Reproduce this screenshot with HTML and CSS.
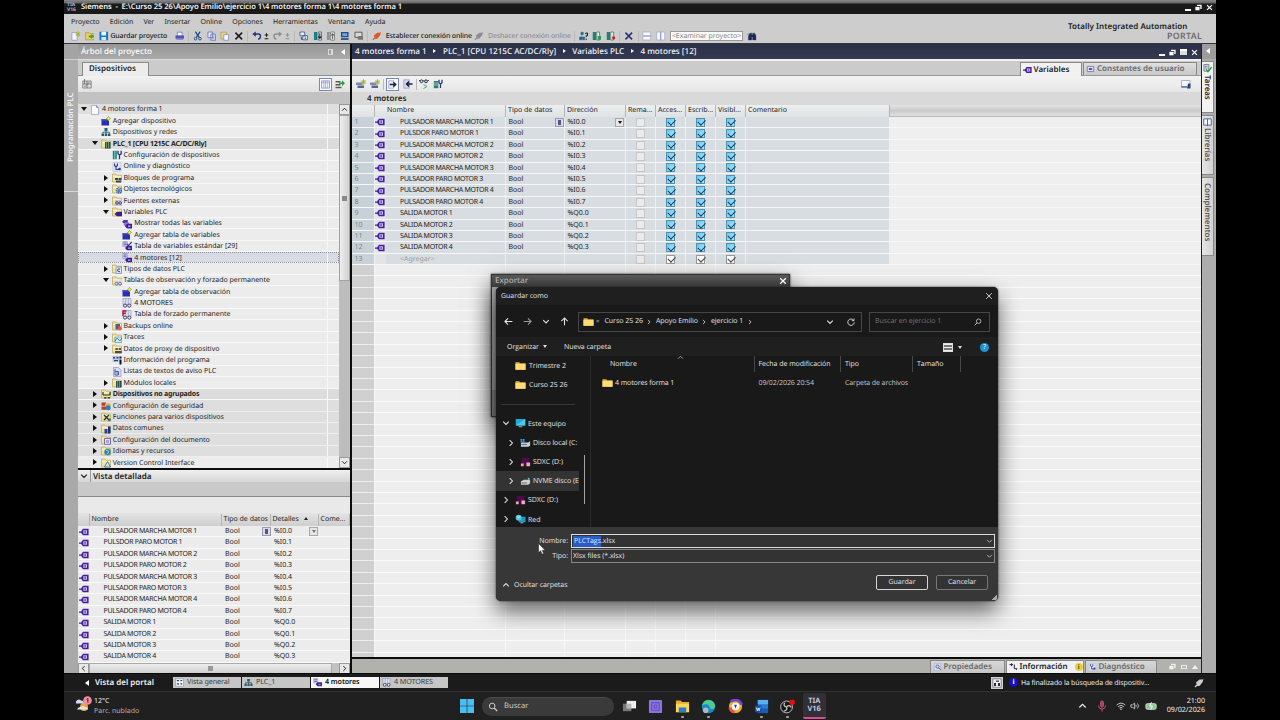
FILE: index.html
```html
<!DOCTYPE html>
<html lang="es">
<head>
  <meta charset="UTF-8">
  <title>Siemens - 4 motores forma 1</title>
  <link rel="stylesheet" href="styles.css">
</head>
<body>
  <svg class="sprite" xmlns="http://www.w3.org/2000/svg">
    <symbol id="i-tag" viewBox="0 0 10 8"><path d="M0 3.500h2L4 .8h5.600v6.400H4L2 4.800H0z" fill="#44209a"/><path d="M4.300 2.300h3.700v3.400H4.300z" fill="#cfc2f0"/><path d="M5.300 3.300h1.700v1.400H5.300z" fill="#5a35b0"/></symbol>
    <symbol id="i-page" viewBox="0 0 10 10"><path d="M1.500.5h5l2 2v7h-7z" fill="#fafbff" stroke="#9aa6cc" stroke-width=".8"/><path d="M6.500.5v2h2" fill="none" stroke="#7784b8" stroke-width=".8"/></symbol>
    <symbol id="i-new" viewBox="0 0 10 10"><path d="M.5 3h7.500v6.500H.5z" fill="#2a2fae"/><path d="M.5 3h7.500v1.500H.5z" fill="#4e58cc"/><path d="M7.500 0v5M5 2.500h5M6 1l3 3M9 1L6 4" stroke="#a9b820" stroke-width=".9"/><circle cx="7.500" cy="2.500" r="1" fill="#fff7a0"/></symbol>
    <symbol id="i-net" viewBox="0 0 10 10"><path d="M3.500 1h3v3h-3zM.5 6.500h2.600v2.500H.5zM3.800 6.500h2.500v2.500H3.800zM7 6.500h2.500v2.500H7z" fill="#235f78"/><path d="M5 4v2.500M1.800 6.500V5.200h6.500v1.300" stroke="#2c4858" fill="none" stroke-width=".8"/></symbol>
    <symbol id="i-folder" viewBox="0 0 10 10"><path d="M.5 1h3.500l1 1.200h4.500V9h-9z" fill="#f1e3a0" stroke="#b9a45c" stroke-width=".7"/><path d="M1 3.500h8" stroke="#fff8d8" stroke-width=".8"/></symbol>
    <symbol id="i-plc" viewBox="0 0 10 10"><use href="#i-folder"/><path d="M4 3h5.500v6.500H4z" fill="#27504c"/><path d="M5.500 3v6M7.500 3v6" stroke="#7fb09a" stroke-width=".7"/></symbol>
    <symbol id="i-conf" viewBox="0 0 10 10"><path d="M.8.8h4v8.400h-4z" fill="#1e8088"/><path d="M2.800 1v8" stroke="#a5dfe0" stroke-width=".8"/><path d="M6 .8v3l1.500 1v4.500M9.200.8v3L7.500 5" fill="none" stroke="#23388c" stroke-width="1.300"/></symbol>
    <symbol id="i-diag" viewBox="0 0 10 10"><path d="M1 .5h8v9H1z" fill="#dfe4f4" stroke="#b4bddc" stroke-width=".6"/><path d="M2.500 1.500v2L4 5l1.400-1.500v-2M4 5v2.500h3" fill="none" stroke="#2a3d92" stroke-width="1.100"/><circle cx="7.500" cy="7" r="1.300" fill="#2a3d92"/></symbol>
    <symbol id="i-blocks" viewBox="0 0 10 10"><use href="#i-folder"/><path d="M3 5h3v2H3zM6.500 5h3v2h-3zM4 7.500h5v2H4z" fill="#34494c"/></symbol>
    <symbol id="i-tech" viewBox="0 0 10 10"><use href="#i-folder"/><circle cx="7" cy="6.500" r="2.500" fill="none" stroke="#2b62b4" stroke-width="1.600" stroke-dasharray="1.200 .6"/><circle cx="7" cy="6.500" r="1.500" fill="#3f78c6"/></symbol>
    <symbol id="i-ext" viewBox="0 0 10 10"><use href="#i-folder"/><path d="M3 4h7v5.500H3z" fill="#bfc2d8"/><circle cx="5" cy="7" r="1.300" fill="none" stroke="#4b4c80"/><circle cx="8.200" cy="7" r="1.300" fill="none" stroke="#4b4c80"/></symbol>
    <symbol id="i-vars" viewBox="0 0 10 10"><use href="#i-folder"/><path d="M2.500 7L5 4.800h5v4.500H5z" fill="#3c1f8c"/></symbol>
    <symbol id="i-table" viewBox="0 0 10 10"><path d="M.8.5h4.500v5H.8z" fill="#dfe1f3" stroke="#8686b8" stroke-width=".6"/><path d="M1.500 2h3M1.500 3.800h3" stroke="#4e3b9c" stroke-width=".9"/><path d="M3 7l2-2.300h5v4.600H5z" fill="#3e1f96"/><path d="M6 6.500h2.500V8H6z" fill="#9e8dd4"/></symbol>
    <symbol id="i-alltags" viewBox="0 0 10 10"><path d="M0 2.800L1.800 1h4v3.500h-4z" fill="#5434a8"/><path d="M1.500 5.500l1.800-2h4v4h-4z" fill="#8a76cc"/><path d="M3 7.200l2-2.400h5v4.700H5z" fill="#3e1f96"/><path d="M6 6.500h2.500V8H6z" fill="#b5a8e0"/></symbol>
    <symbol id="i-stdtable" viewBox="0 0 10 10"><use href="#i-table"/><path d="M5 3l1.500 1.600L9.700.8" fill="none" stroke="#3a3a8c" stroke-width="1.300"/></symbol>
    <symbol id="i-types" viewBox="0 0 10 10"><use href="#i-folder"/><path d="M4 3h5.500v6.500H4z" fill="#e3e6f4" stroke="#6a72a6" stroke-width=".6"/><path d="M8 5q-2.500-.5-2.500 1.200T8 7.800" fill="none" stroke="#26388c"/></symbol>
    <symbol id="i-watch" viewBox="0 0 10 10"><path d="M1 .5h8v6H1z" fill="#dfe2f2" stroke="#8f96bc" stroke-width=".7"/><path d="M3.600 1v5M6.300 1v5" stroke="#8f96bc" stroke-width=".7"/><circle cx="3" cy="7.600" r="1.600" fill="#e8e8f4" stroke="#33365e" stroke-width=".9"/><circle cx="7.300" cy="7.600" r="1.600" fill="#e8e8f4" stroke="#33365e" stroke-width=".9"/></symbol>
    <symbol id="i-wfolder" viewBox="0 0 10 10"><use href="#i-folder"/><path d="M3 3.500h7v4H3z" fill="#dfe2f2"/><circle cx="4.500" cy="7.600" r="1.500" fill="#d8daf0" stroke="#55588a" stroke-width=".8"/><circle cx="8" cy="7.600" r="1.500" fill="#d8daf0" stroke="#55588a" stroke-width=".8"/></symbol>
    <symbol id="i-force" viewBox="0 0 10 10"><use href="#i-watch"/><path d="M1 6V1h3.500M1 3.300h2.800" fill="none" stroke="#c01040" stroke-width="1.400"/></symbol>
    <symbol id="i-backup" viewBox="0 0 10 10"><use href="#i-folder"/><path d="M3.500 3h4.500v5.500H3.500z" fill="#4a5aa6"/><circle cx="7.800" cy="7.200" r="2" fill="#e2602e"/></symbol>
    <symbol id="i-trace" viewBox="0 0 10 10"><use href="#i-folder"/><path d="M3 4h6.800v5.500H3z" fill="#d5eef6" stroke="#3b85a6" stroke-width=".6"/><path d="M3 8q2-4 3.500-1.500T10 5" fill="none" stroke="#1d6c9a"/></symbol>
    <symbol id="i-proxy" viewBox="0 0 10 10"><use href="#i-folder"/><path d="M3.500 4h2.300v2H3.500zM6.800 4h2.300v2H6.800zM3 7h6.800v2.300H3z" fill="#4a4d44"/></symbol>
    <symbol id="i-info" viewBox="0 0 10 10"><path d="M.5.800h7v6h-7z" fill="#bcc4e2"/><path d="M1 2h2v1.500H1zM4.500 2h2v1.500h-2zM2 5h4v1.300H2z" fill="#35417c"/><path d="M7.500 1.500h2v2h-2zM7.500 4.500h2v5h-2z" fill="#101424"/></symbol>
    <symbol id="i-list" viewBox="0 0 10 10"><path d="M1.500.5h5L9 3v6.500H1.500z" fill="#d7dcf0" stroke="#8b95c4" stroke-width=".7"/><path d="M3 2v6M3 4.500h3.500V8H3M4.500 6h2" fill="none" stroke="#4a5aa2"/></symbol>
    <symbol id="i-ungroup" viewBox="0 0 10 10"><use href="#i-folder"/><path d="M2 3v3M9 3v3M2 6h7M3 8.800h2.500M6.500 8.800H9" stroke="#27332c" stroke-width="1.200"/></symbol>
    <symbol id="i-sec" viewBox="0 0 10 10"><path d="M.5 1.500h4.500v3.300H.5zM.5 5.500h4.500v3.300H.5z" fill="#b8402c"/><path d="M4 2.500h5.500V5H4z" fill="#d9b14d"/><circle cx="7.200" cy="6.800" r="2.500" fill="#2f80b4"/></symbol>
    <symbol id="i-func" viewBox="0 0 10 10"><use href="#i-folder"/><path d="M3 3l5 5M8 3L3 8" stroke="#23392c" stroke-width="1.400"/><path d="M7.500 6.500h2.200v2.700H7.500z" fill="#2c7858"/></symbol>
    <symbol id="i-common" viewBox="0 0 10 10"><use href="#i-folder"/><path d="M3.500 5h3v4.500h-3z" fill="#2b3fb8"/><path d="M7 2.500h2.500v7H7z" fill="#20307e"/></symbol>
    <symbol id="i-doc" viewBox="0 0 10 10"><use href="#i-folder"/><path d="M3.500 3.500h6v5.800h-6z" fill="#e4e2f4" stroke="#6c5fae" stroke-width=".9"/><path d="M5 5h3v3H5z" fill="#a9a4d4"/></symbol>
    <symbol id="i-lang" viewBox="0 0 10 10"><use href="#i-folder"/><circle cx="6.500" cy="6" r="3.200" fill="#2787ad"/><path d="M5 4.500q2-1 2.500.8T5.600 8" fill="none" stroke="#a5e0d0"/></symbol>
    <symbol id="i-vci" viewBox="0 0 10 10"><use href="#i-folder"/><path d="M3.500 9L6.500 3.500 9.500 9z" fill="#d7e6ee" stroke="#41769a" stroke-width=".9"/></symbol>
    <symbol id="i-save" viewBox="0 0 10 10"><path d="M.5.500h9v9h-9z" fill="#1376c4"/><path d="M2.500.500h5v4h-5z" fill="#e8f6ff"/><path d="M2.500 6h5v3.500h-5z" fill="#d0e6f5"/></symbol>
    <symbol id="i-open" viewBox="0 0 10 10"><path d="M.5 1.500h4l1 1h4V9H.5z" fill="#e8cf58" stroke="#a58b28" stroke-width=".6"/><path d="M4 4.500h2.500V2.800L10 5.500 6.500 8V6.500H4z" fill="#2fa548"/></symbol>
    <symbol id="i-newpage" viewBox="0 0 10 10"><path d="M1 1.500h5.500V9.500H1z" fill="#f5f7ff" stroke="#8090c0" stroke-width=".7"/><path d="M7.500 0v6M4.700 3h5.300M5.500 1l4 4M9.500 1l-4 4" stroke="#a4b018" stroke-width=".9"/></symbol>
    <symbol id="i-print" viewBox="0 0 10 10"><path d="M2.500 1h5v4h-5z" fill="#fff" stroke="#5862b8" stroke-width=".7"/><path d="M.5 4.500h9V8h-9z" fill="#4a55c4"/><path d="M1.500 8h7v1.300h-7z" fill="#9d87cf"/></symbol>
    <symbol id="i-cut" viewBox="0 0 10 10"><path d="M2.500.5l4 6M7.500.5l-4 6" stroke="#254d82" stroke-width="1.400"/><circle cx="2.700" cy="7.800" r="1.400" fill="none" stroke="#254d82"/><circle cx="7.300" cy="7.800" r="1.400" fill="none" stroke="#254d82"/></symbol>
    <symbol id="i-copy" viewBox="0 0 10 10"><path d="M1 .8h5v6H1zM4 3h5v6.500H4z" fill="#e8ecfb" stroke="#5a68b8" stroke-width=".8"/><path d="M5 5h3M5 6.500h3M5 8h3" stroke="#6878c0" stroke-width=".7"/></symbol>
    <symbol id="i-paste" viewBox="0 0 10 10"><path d="M1 1h6v7H1z" fill="#ecd58c" stroke="#a3904c" stroke-width=".7"/><path d="M4 3.500h5v6H4z" fill="#f6f8ff" stroke="#7d8abc" stroke-width=".8"/></symbol>
    <symbol id="i-x" viewBox="0 0 10 10"><path d="M1.500 1.500l7 7M8.500 1.500l-7 7" stroke="currentColor" stroke-width="1.700"/></symbol>
    <symbol id="i-xthin" viewBox="0 0 10 10"><path d="M1.500 1.500l7 7M8.500 1.500l-7 7" stroke="currentColor" stroke-width="1.100"/></symbol>
    <symbol id="i-undo" viewBox="0 0 10 10"><path d="M2 3h4.500q2.500 0 2.500 2.300T6.500 8.500" fill="none" stroke="currentColor" stroke-width="1.600"/><path d="M4 .2v5.600L.3 3z" fill="currentColor"/></symbol>
    <symbol id="i-more" viewBox="0 0 6 10"><path d="M3 1.500v4.500M.8 3.800h4.400M.8 8.300h4.400" stroke="currentColor" stroke-width="1.200"/></symbol>
    <symbol id="i-compile" viewBox="0 0 10 10"><path d="M1 .8h5v4H1zM4 4.500h5v4.500H4z" fill="#e8f0fb" stroke="#405f8e" stroke-width=".9"/><path d="M2.500 6v2.500H4M6 6h1.500M6 7.500h1.500" stroke="#27548a" fill="none"/></symbol>
    <symbol id="i-down" viewBox="0 0 10 10"><path d="M1 .8h3.500v8.500H1z" fill="#1b7f84"/><path d="M5.500 .8H9v8.500H5.500z" fill="#e8f2f5" stroke="#345" stroke-width=".7"/><path d="M7.200 2v5M5.600 5.500l1.600 2 1.600-2" fill="none" stroke="#121c30" stroke-width="1.100"/></symbol>
    <symbol id="i-up" viewBox="0 0 10 10"><path d="M1 .8h3v8.500H1z" fill="#929292"/><path d="M5 .8h4v8.500H5z" fill="#f3f3f3" stroke="#555" stroke-width=".7"/><path d="M7 8V3M5.600 4.500l1.400-2 1.400 2" fill="none" stroke="#444" stroke-width="1"/></symbol>
    <symbol id="i-screen" viewBox="0 0 10 10"><path d="M1 .8h8v5.500H1z" fill="#244d86"/><path d="M2.500 2h5v3h-5z" fill="#78a8d8"/><path d="M1 7.200h8v2H1z" fill="#3c5c90"/></symbol>
    <symbol id="i-rt" viewBox="0 0 10 10"><path d="M1 1h7.500v5.500H1z" fill="#d8d8d8" stroke="#5b5b5b"/><path d="M4 5h5.500v4H4z" fill="#777"/></symbol>
    <symbol id="i-plug" viewBox="0 0 10 10"><path d="M1 9l2-2" stroke="currentColor" stroke-width="1.400"/><path d="M2 4.500L5.500 1.500h3L9.500.5 8.700 4 5.500 8H3z" fill="currentColor"/></symbol>
    <symbol id="i-access" viewBox="0 0 10 10"><path d="M2 1h2.500v2.500H2zM.5 6h3v3h-3zM4 6h2v3H4zM3 3.500V6" fill="#27648c" stroke="#27648c" stroke-width=".5"/><path d="M6.500 2.500q2.500-1.500 2.500.4T7.700 5v1M7.700 8v1" fill="none" stroke="#14182c" stroke-width="1.200"/></symbol>
    <symbol id="i-start" viewBox="0 0 10 10"><path d="M.8.8h3.500v8.400H.8z" fill="#257f72"/><path d="M5 .8h3v8.400H5z" fill="#e9f1ee" stroke="#3a5c52" stroke-width=".7"/><path d="M6 5h3.500v4H6z" fill="#25a04c"/></symbol>
    <symbol id="i-stop" viewBox="0 0 10 10"><path d="M.8.8h3.500v8.400H.8z" fill="#257f72"/><path d="M5 .8h3v8.400H5z" fill="#e9f1ee" stroke="#3a5c52" stroke-width=".7"/><path d="M6.500 5.500h3v3h-3z" fill="#c81e2c"/></symbol>
    <symbol id="i-hsplit" viewBox="0 0 10 10"><path d="M.8.8h8.400v8.400H.8z" fill="#f8f8fd" stroke="#9ba2ca" stroke-width=".7"/><path d="M1 5h8" stroke="#606c9e" stroke-width=".9"/></symbol>
    <symbol id="i-vsplit" viewBox="0 0 10 10"><path d="M.8.8h8.400v8.400H.8z" fill="#f8f8fd" stroke="#9ba2ca" stroke-width=".7"/><path d="M5 1v8" stroke="#606c9e" stroke-width=".9"/></symbol>
    <symbol id="i-book" viewBox="0 0 10 10"><path d="M.8 1.500H5l4.200 0v7H.8z" fill="#f8f8fd" stroke="#4458a4"/><path d="M5 1.500v8" stroke="#4458a4"/></symbol>
    <symbol id="i-find" viewBox="0 0 10 10"><path d="M0 3h2M3 2h2v2h1V2h2l1.500 3v4.200H6V6H5v3.200H1.500V5z" fill="#1c2a5a" stroke="#1c2a5a" stroke-width=".4"/></symbol>
    <symbol id="i-addrow" viewBox="0 0 10 10"><path d="M0 3.500h6.500V6H0z" fill="#7f88ae"/><path d="M1.500 6.500h6.500V9H1.500z" fill="#59638f"/><path d="M7.500.300v5.400M4.800 3h5.400M5.600 1.100l3.800 3.800M9.400 1.100L5.600 4.900" stroke="#a2ae20" stroke-width=".9"/></symbol>
    <symbol id="i-export" viewBox="0 0 10 10"><path d="M.8.8h5.500v8.400H.8z" fill="#e6eaf8" stroke="#8e98c4" stroke-width=".7"/><path d="M2 5h5.500M6 2.500L8.700 5 6 7.500" fill="none" stroke="#171c3a" stroke-width="1.400"/></symbol>
    <symbol id="i-import" viewBox="0 0 10 10"><path d="M.8.8h5.500v8.400H.8z" fill="#d3d8ec" stroke="#8e98c4" stroke-width=".7"/><path d="M9.500 5H4M6 2.500L3.500 5 6 7.500" fill="none" stroke="#171c3a" stroke-width="1.400"/></symbol>
    <symbol id="i-glasses" viewBox="0 0 10 10"><path d="M0 1.500h1M4 1.800h1.500M8.500 1.500h1.500" stroke="#20243c" stroke-width=".8"/><circle cx="2.500" cy="2.300" r="1.400" fill="none" stroke="#20243c"/><circle cx="7" cy="2.300" r="1.400" fill="none" stroke="#20243c"/><path d="M4.500 5.500l3.500 2-3.500 2" fill="none" stroke="#3eb07e"/></symbol>
    <symbol id="i-mod" viewBox="0 0 10 10"><path d="M.8 2h4.500v7.200H.8z" fill="#38766f"/><path d="M1 4h4M1 6h4" stroke="#b5dcd0" stroke-width=".8"/><path d="M6 .8v3L7.500 5v4M9 .8v3L7.500 5" fill="none" stroke="#223c80" stroke-width="1.300"/></symbol>
    <symbol id="i-grid" viewBox="0 0 10 10"><path d="M.8 2h8.400v7H.8z" fill="#dcdcdc" stroke="#777" stroke-width=".8"/><path d="M2.500 0v5M5 2v7M7.500 3l-5 5M1 5h8" stroke="#6c6c6c" stroke-width=".8"/></symbol>
    <symbol id="i-cols" viewBox="0 0 10 10"><path d="M.5 1h9v8h-9z" fill="#eef0fa" stroke="#7784b8" stroke-width=".8"/><path d="M3 1v8M5 1v8M7 1v8M1 3h8" stroke="#8994c2" stroke-width=".6"/></symbol>
    <symbol id="i-overview" viewBox="0 0 10 10"><path d="M.5.800h9v8.400h-9z" fill="#f4f6fa" stroke="#8890a8" stroke-width=".7"/><path d="M2 3h2.500M6 3h2M2 6.500h2.500M6 6.500h2" stroke="#2b4a6c" stroke-width="1.400"/></symbol>
    <symbol id="i-goto" viewBox="0 0 10 10"><path d="M.5 2h5v1.500h-5zM.5 5h5v1.500h-5zM.5 7.800h6v1.500h-6z" fill="#555b54"/><path d="M4 3.500h3V1.200L10 4.300 7 7V5H4z" fill="#2c9a44"/></symbol>
    <symbol id="i-tasks" viewBox="0 0 10 10"><path d="M1 1h5.500v7.500H1z" fill="#dfe6ee" stroke="#4a5a70" stroke-width=".8"/><path d="M2 3h3M2 5h3" stroke="#4a5a70" stroke-width=".8"/><path d="M3.500 6.500l2 2.500L9.500 4" fill="none" stroke="#25a03c" stroke-width="1.600"/></symbol>
    <symbol id="i-layout" viewBox="0 0 10 10"><path d="M.5 1.500h8.500v7H.5z" fill="#f6f8fd" stroke="#8b96be" stroke-width=".7"/><path d="M.5 7.800H6" stroke="#334a88"/><path d="M7 4.500h2.500v5H6z" fill="#284878"/></symbol>
    <symbol id="i-mini" viewBox="0 0 10 10"><path d="M.8.8h8.400v8.400H.8z" fill="#f0f0f4" stroke="#666" stroke-width=".7"/><path d="M2 5h2v3H2zM6 5h2v3H6z" fill="#222a50"/><path d="M4 2.500h3v1.500H4z" fill="#555"/></symbol>
    <symbol id="i-const" viewBox="0 0 10 10"><path d="M1 1.800h8v6.400H1z" fill="#e3e1f4" stroke="#6a64b0" stroke-width=".9"/><path d="M3 4h4v2H3z" fill="#3a3590"/></symbol>
    <symbol id="i-prop" viewBox="0 0 10 10"><path d="M1 .8h8v8.400H1z" fill="#dde2f3" stroke="#98a2c6" stroke-width=".6"/><circle cx="5" cy="4.500" r="2" fill="none" stroke="#37487e"/><path d="M6.500 6L9 8.500" stroke="#37487e" stroke-width="1.200"/></symbol>
    <symbol id="i-infotab" viewBox="0 0 10 10"><path d="M0 2h4M2 .5L4 2 2 3.700M6 2v5h1.500" fill="none" stroke="#14183c" stroke-width="1.200"/><path d="M7 6.500h3L8.500 9z" fill="#14183c"/></symbol>
    <symbol id="i-restore" viewBox="0 0 10 10"><path d="M3 1h6.500v6H7.500V3H3z" fill="currentColor"/><path d="M.5 4h6v5h-6z" fill="currentColor"/></symbol>
    <symbol id="i-dfolder" viewBox="0 0 12 10"><path d="M.5.800h4l1.200 1.300h5.800V9H.5z" fill="#e6b23c"/><path d="M.5 2.800h11V9H.5z" fill="#ffdc76"/></symbol>
    <symbol id="i-pc" viewBox="0 0 12 10"><path d="M.8.500h10.400v7.300H.8z" fill="#25a8d8"/><path d="M.8 7.800L11.200.5v7.300z" fill="#4ccbe8"/><path d="M4 8.500h4v1H4z" fill="#8ab4c4"/></symbol>
    <symbol id="i-disk" viewBox="0 0 12 10"><path d="M1 4.500h8l2-1.500v5l-2 1H1z" fill="#c5d4da"/><path d="M1.500 6h6v1.200h-6z" fill="#57737e"/><path d="M.5.500h2v1.700h-2zM3 .5h2v1.700H3zM.5 2.500h2V4h-2zM3 2.500h2V4H3z" fill="#22a4e8"/></symbol>
    <symbol id="i-nvme" viewBox="0 0 12 10"><path d="M1 5.500l3-2h7v4l-2 1.700H1z" fill="#c9cfd0"/><path d="M1.500 6.500h6v1.200h-6z" fill="#6c7478"/><circle cx="9.500" cy="2.500" r="1" fill="#74c1d4"/></symbol>
    <symbol id="i-sd" viewBox="0 0 12 10"><path d="M2 .5h8v8H2z" fill="#4f0a4e"/><path d="M1 6.500h3v3H1zM7 5.500h4v4H7z" fill="#f3a6b8"/></symbol>
    <symbol id="i-red" viewBox="0 0 12 10"><path d="M4 2.500h7.500v6H4z" fill="#2396c4"/><circle cx="4" cy="3.500" r="3.200" fill="#58c3dc"/><path d="M2 2.500q2 2 4-.5" stroke="#d7f3ea" fill="none"/><path d="M6 8.500h3v1.200H6z" fill="#8fb6c4"/></symbol>
    <symbol id="i-chev" viewBox="0 0 10 10"><path d="M1.500 3.300L5 6.800l3.500-3.500" fill="none" stroke="currentColor" stroke-width="1.300"/></symbol>
    <symbol id="i-left" viewBox="0 0 10 10"><path d="M9.300 5H1M4.500 1.500L1 5l3.500 3.500" fill="none" stroke="currentColor" stroke-width="1.200"/></symbol>
    <symbol id="i-mag" viewBox="0 0 10 10"><circle cx="5.800" cy="4" r="2.800" fill="none" stroke="currentColor"/><path d="M3.800 6L.8 9" stroke="currentColor" stroke-width="1.200"/></symbol>
    <symbol id="i-refresh" viewBox="0 0 10 10"><path d="M8.300 3A4 4 0 1 0 9 5.300M8.700.6V3.300H6" fill="none" stroke="currentColor" stroke-width="1.100"/></symbol>
  </svg>

  <div class="app">
    <header class="titlebar">
      <span class="tia-logo">TIA<br>V16</span>
      <span class="title-text">Siemens&nbsp; -&nbsp; E:\Curso 25 26\Apoyo Emilio\ejercicio 1\4 motores forma 1\4 motores forma 1</span>
      <span class="win-btns"><i class="min"></i><svg><use href="#i-restore"/></svg><svg><use href="#i-x"/></svg></span>
    </header>

    <div class="topbar">
      <nav class="menu">
        <span>Proyecto</span><span>Edición</span><span>Ver</span><span>Insertar</span><span>Online</span><span>Opciones</span><span>Herramientas</span><span>Ventana</span><span>Ayuda</span>
      </nav>
      <div class="brand"><b>Totally Integrated Automation</b><span>PORTAL</span></div>
      <div class="toolbar">
        <svg><use href="#i-newpage"/></svg><svg><use href="#i-open"/></svg><svg><use href="#i-save"/></svg>
        <span class="tb-save">Guardar proyecto</span>
        <svg><use href="#i-print"/></svg><i class="sep"></i>
        <svg><use href="#i-cut"/></svg><svg><use href="#i-copy"/></svg><svg><use href="#i-paste"/></svg><svg><use href="#i-x"/></svg><i class="sep"></i>
        <svg class="navy"><use href="#i-undo"/></svg><svg class="narrow"><use href="#i-more"/></svg>
        <svg class="grey flip"><use href="#i-undo"/></svg><svg class="narrow grey"><use href="#i-more"/></svg><i class="sep"></i>
        <svg><use href="#i-compile"/></svg><svg><use href="#i-down"/></svg><svg><use href="#i-up"/></svg><svg><use href="#i-screen"/></svg><svg><use href="#i-rt"/></svg><i class="sep"></i>
        <svg class="orange"><use href="#i-plug"/></svg><span class="tb-on">Establecer conexión online</span>
        <svg class="grey"><use href="#i-plug"/></svg><span class="tb-off">Deshacer conexión online</span>
        <i class="sep"></i><svg><use href="#i-access"/></svg><svg><use href="#i-start"/></svg><svg><use href="#i-stop"/></svg><i class="sep"></i>
        <svg class="navy"><use href="#i-x"/></svg><i class="sep"></i><svg><use href="#i-hsplit"/></svg><svg><use href="#i-vsplit"/></svg>
        <span class="search-box">&lt;Examinar proyecto&gt;</span><svg><use href="#i-find"/></svg>
      </div>
    </div>

    <div class="workspace">
      <aside class="strip-left"><span>Programación PLC</span></aside>

      <section class="sidebar">
        <div class="side-head"><span>Árbol del proyecto</span><i class="pin"></i><i class="tri-left"></i></div>
        <div class="tab-band"><span class="tab">Dispositivos</span></div>
        <div class="side-tools"><svg><use href="#i-grid"/></svg><span class="pressed"><svg><use href="#i-cols"/></svg></span><svg><use href="#i-goto"/></svg></div>
        <div class="side-gap"></div>
        <div class="tree-wrap">
          <div class="tree" id="tree"></div>
          <div class="vscroll"><svg class="btn up"><use href="#i-chev"/></svg><i class="thumb"></i><i class="rest"></i><svg class="btn"><use href="#i-chev"/></svg></div>
        </div>
        <div class="detail-head"><svg><use href="#i-chev"/></svg><b>Vista detallada</b></div>
        <div class="detail-band"></div>
        <div class="detail-tools"></div>
        <div class="detail-cols"><span></span><span>Nombre</span><span>Tipo de datos</span><span>Detalles <i class="sort"></i></span><span>Come...</span></div>
        <div class="detail-rows" id="detail"></div>
        <div class="hscroll"><svg class="btn l"><use href="#i-chev"/></svg><i class="thumb"></i><i class="rest"></i><svg class="btn r"><use href="#i-chev"/></svg></div>
      </section>

      <main class="editor">
        <div class="crumbs">
          <span class="crumb-text">4 motores forma 1 <i></i> PLC_1 [CPU 1215C AC/DC/Rly] <i></i> Variables PLC <i></i> 4 motores [12]</span>
          <span class="win-btns"><i class="min"></i><svg><use href="#i-restore"/></svg><i class="max"></i><svg><use href="#i-x"/></svg></span>
        </div>
        <div class="ed-tabs">
          <span class="tab"><svg class="tag"><use href="#i-tag"/></svg>Variables</span>
          <span class="tab off"><svg><use href="#i-const"/></svg>Constantes de usuario</span>
        </div>
        <div class="ed-tools">
          <svg><use href="#i-addrow"/></svg><svg><use href="#i-addrow"/></svg><i class="sep"></i>
          <span class="pressed"><svg><use href="#i-export"/></svg></span><svg><use href="#i-import"/></svg><i class="sep"></i>
          <svg><use href="#i-glasses"/></svg><svg><use href="#i-mod"/></svg><svg class="last"><use href="#i-layout"/></svg>
        </div>
        <div class="ed-title">4 motores</div>
        <div class="grid-head"><span></span><span></span><span>Nombre</span><span>Tipo de datos</span><span>Dirección</span><span>Rema...</span><span>Acces...</span><span>Escrib...</span><span>Visibl...</span><span>Comentario</span></div>
        <div class="grid-body" id="grid"></div>
        <div class="grid-blank"><i></i><i></i><i></i><i></i><i></i><i></i><i></i><i></i></div>
        <div class="inspector">
          <span class="tab off"><svg><use href="#i-prop"/></svg>Propiedades</span>
          <span class="tab"><svg><use href="#i-infotab"/></svg>Información<i class="badge">i</i></span>
          <span class="tab off diag"><svg><use href="#i-diag"/></svg>Diagnóstico</span>
          <span class="insp-btns"><svg><use href="#i-restore"/></svg><i class="bar"></i><i class="tri-up"></i></span>
        </div>
      </main>

      <aside class="strip-right">
        <div class="sr-head"><i class="tri-left"></i></div>
        <div class="sr-tab tareas"><svg><use href="#i-tasks"/></svg><span>Tareas</span></div>
        <div class="sr-tab librerias"><svg><use href="#i-book"/></svg><span>Librerías</span></div>
        <div class="sr-tab complementos"><span>Complementos</span></div>
      </aside>
    </div>

    <div class="portal-bar">
      <span class="portal"><i class="tri-left"></i>Vista del portal</span>
      <span class="ptab"><svg><use href="#i-overview"/></svg>Vista general</span>
      <span class="ptab"><svg><use href="#i-net"/></svg>PLC_1</span>
      <span class="ptab active"><svg><use href="#i-table"/></svg>4 motores</span>
      <span class="ptab"><svg><use href="#i-watch"/></svg>4 MOTORES</span>
      <span class="status"><svg class="st-icon"><use href="#i-mini"/></svg><i class="st-info">i</i><span>Ha finalizado la búsqueda de dispositiv...</span><svg class="st-plug"><use href="#i-plug"/></svg></span>
    </div>

    <footer class="taskbar">
      <div class="weather">
        <svg viewBox="0 0 18 16"><circle cx="9" cy="11" r="4" fill="#f0a33a"/><path d="M1 7.500a3 3 0 0 1 5-3 3 3 0 0 1 3 3z" fill="#cfdcf2"/><path d="M2 13.500q1-3 4-2.500 1.500-2 4 0 3 0 3 2.500z" fill="#dbe6f6"/><circle cx="12.500" cy="4.500" r="4.300" fill="#ee8f9f"/><path d="M11.700 3.300l1.200-.8v4.200" fill="none" stroke="#4a1420"/></svg>
        <div>12°C<br><span>Parc. nublado</span></div>
      </div>
      <div class="dock">
        <svg class="win" viewBox="0 0 14 14"><path d="M0 0h6.700v6.700H0zM7.300 0H14v6.700H7.300zM0 7.300h6.700V14H0zM7.300 7.300H14V14H7.300z" fill="#48bff0"/></svg>
        <span class="task-search"><svg class="flip"><use href="#i-mag"/></svg>Buscar</span>
        <span class="app-ic"><svg viewBox="0 0 16 16"><path d="M1 5h9v8H1z" fill="#777"/><path d="M5 2h10v8H5z" fill="#f0f0f0"/><path d="M5 5h5v5H5z" fill="#b5b5b5"/></svg></span>
        <span class="app-ic"><svg viewBox="0 0 16 16"><rect x="1" y="1" width="14" height="14" rx="1" fill="#8b74e0"/><path d="M4 4h8v8H4zM6.500 6.500h3v3h-3z" fill="none" stroke="#5f49b4"/></svg></span>
        <span class="app-ic run"><svg viewBox="0 0 16 16"><path d="M1 1.500h5l1.500 1.700H15V14H1z" fill="#e9a92a"/><path d="M1 5h14v9H1z" fill="#ffd65c"/><path d="M4 9h8v5H4z" fill="#2482cc"/></svg></span>
        <span class="app-ic run"><svg viewBox="0 0 16 16"><circle cx="8" cy="8" r="7.200" fill="#1788d0"/><path d="M1 7Q4-1 12 2q5 4 2 8-5 2-5-2-1-4-8-1z" fill="#4bce8c"/><circle cx="5" cy="12" r="3" fill="#aeb8c0"/></svg></span>
        <span class="app-ic"><svg viewBox="0 0 16 16"><circle cx="8" cy="8" r="5.500" fill="#fff" stroke="#f4b02c" stroke-width="3"/><path d="M3 3a7 7 0 0 1 11.500 3" fill="none" stroke="#7546d4" stroke-width="3"/><path d="M2 9a6 6 0 0 0 5 5" fill="none" stroke="#e65040" stroke-width="3"/><path d="M6.500 6h3L8 10.500z" fill="#47339c"/></svg></span>
        <span class="app-ic run"><svg viewBox="0 0 16 16"><path d="M4 1h11v14H4z" fill="#2b7cd3"/><path d="M4 1h11v4.500H4z" fill="#58b0f2"/><path d="M4 10h11v5H4z" fill="#185abd"/><path d="M1 7h7v7H1z" fill="#1550a8"/><path d="M2.500 9l1 3.500 1-3 1 3 1-3.500" fill="none" stroke="#fff" stroke-width=".8"/></svg></span>
        <span class="app-ic run"><svg viewBox="0 0 16 16"><circle cx="7" cy="8.500" r="6.300" fill="#181818" stroke="#c4c4c4"/><path d="M7 8.500q-4-1-2-4.500M7 8.500q3-3 5 .5M7 8.500q1 4-3 4.500" fill="none" stroke="#c4c4c4" stroke-width="1.400"/><circle cx="13" cy="3.500" r="3" fill="#e01010"/></svg></span>
        <span class="app-ic tia"><span>TIA</span><span>V16</span></span>
      </div>
      <div class="tray">
        <svg class="up"><use href="#i-chev"/></svg>
        <svg viewBox="0 0 10 12" class="mic"><rect x="3.500" y="1" width="3" height="6" rx="1.500"/><path d="M1.500 5.500q0 3.500 3.500 3.500t3.500-3.500M5 9v2.500" fill="none"/></svg>
        <svg viewBox="0 0 12 10"><path d="M.8 3.800q5.200-4.500 10.400 0M2.500 5.700q3.500-3 7 0M4.200 7.400q1.800-1.500 3.600 0" fill="none" stroke="#ddd"/><circle cx="6" cy="8.800" r=".9" fill="#ddd"/></svg>
        <svg viewBox="0 0 12 10"><path d="M1 3.500h2L5.500 1.500v7L3 6.500H1zM7 3.500q1 1.500 0 3M9 2q2.500 3 0 6" fill="none" stroke="#ddd" stroke-width=".9"/></svg>
        <svg viewBox="0 0 14 10" class="batt"><rect x="1" y="2.500" width="11" height="6" rx="1.500" fill="#88c88e" stroke="#ddd"/><path d="M7 1L5 5h3L6 9" fill="none" stroke="#fff"/></svg>
        <div class="clock">21:00<br>09/02/2026</div>
      </div>
    </footer>
  </div>

  <div class="export-win"><span>Exportar</span><svg><use href="#i-x"/></svg></div>

  <div class="dialog">
    <div class="d-title"><span>Guardar como</span><svg><use href="#i-xthin"/></svg></div>
    <div class="d-nav">
      <svg><use href="#i-left"/></svg><svg class="flip dim"><use href="#i-left"/></svg><svg class="small"><use href="#i-chev"/></svg><svg class="rot"><use href="#i-left"/></svg>
      <div class="address"><svg class="fold"><use href="#i-dfolder"/></svg><em>«</em><span>Curso 25 26</span><svg class="gt"><use href="#i-chev"/></svg><span>Apoyo Emilio</span><svg class="gt"><use href="#i-chev"/></svg><span>ejercicio 1</span><svg class="gt"><use href="#i-chev"/></svg><svg class="drop"><use href="#i-chev"/></svg><svg class="refresh"><use href="#i-refresh"/></svg></div>
      <div class="d-search"><span>Buscar en ejercicio 1</span><svg><use href="#i-mag"/></svg></div>
    </div>
    <div class="d-cmd"><span class="org">Organizar <i class="caret"></i></span><span>Nueva carpeta</span><i class="listview"></i><i class="caret c2"></i><i class="help">?</i></div>
    <div class="d-body">
      <div class="places">
        <div class="place p1"><svg><use href="#i-dfolder"/></svg><span>Trimestre 2</span></div>
        <div class="place p1"><svg><use href="#i-dfolder"/></svg><span>Curso 25 26</span></div>
        <div class="rule"></div>
        <div class="place"><svg class="ex open"><use href="#i-chev"/></svg><svg><use href="#i-pc"/></svg><span>Este equipo</span></div>
        <div class="place p2"><svg class="ex"><use href="#i-chev"/></svg><svg><use href="#i-disk"/></svg><span>Disco local (C:</span></div>
        <div class="place p2"><svg class="ex"><use href="#i-chev"/></svg><svg><use href="#i-sd"/></svg><span>SDXC (D:)</span></div>
        <div class="place p2 sel"><svg class="ex"><use href="#i-chev"/></svg><svg><use href="#i-nvme"/></svg><span>NVME disco (E</span></div>
        <div class="place"><svg class="ex"><use href="#i-chev"/></svg><svg><use href="#i-sd"/></svg><span>SDXC (D:)</span></div>
        <div class="place"><svg class="ex"><use href="#i-chev"/></svg><svg><use href="#i-red"/></svg><span>Red</span></div>
        <i class="places-thumb"></i>
      </div>
      <div class="files">
        <svg class="sort-mark"><use href="#i-chev"/></svg>
        <div class="f-head"><span>Nombre</span><span>Fecha de modificación</span><span>Tipo</span><span>Tamaño</span></div>
        <div class="f-row"><span><svg><use href="#i-dfolder"/></svg>4 motores forma 1</span><span>09/02/2026 20:54</span><span>Carpeta de archivos</span></div>
      </div>
    </div>
    <div class="d-foot">
      <div class="field"><label>Nombre:</label><div class="input on"><span><mark>PLCTags</mark>.xlsx</span><svg><use href="#i-chev"/></svg></div></div>
      <div class="field"><label>Tipo:</label><div class="input"><span>Xlsx files (*.xlsx)</span><svg><use href="#i-chev"/></svg></div></div>
      <div class="d-actions"><span class="hide"><svg><use href="#i-chev"/></svg>Ocultar carpetas</span><span class="dbtn main">Guardar</span><span class="dbtn">Cancelar</span></div>
      <i class="grip"></i>
    </div>
  </div>
  <svg class="cursor" viewBox="0 0 8 12"><path d="M.6.600v9l2-1.800 1.500 3.400 1.500-.7L4.200 7.200h2.900z" fill="#fff" stroke="#222" stroke-width=".5"/></svg>

  <script src="app.js"></script>
</body>
</html>
```

FILE: styles.css
```css
* {
  margin: 0;
  padding: 0;
  box-sizing: border-box;
}

body {
  width: 1280px;
  height: 720px;
  overflow: hidden;
  background: #000;
  color: #1c1c1c;
  font-family: "Noto Sans", "Open Sans", sans-serif;
  font-size: 7px;
  line-height: 1;
  text-rendering: geometricPrecision;
  white-space: nowrap;
}

svg {
  width: 10px;
  height: 10px;
  flex: none;
  display: block;
}

i, em { font-style: normal; }

.sprite { position: absolute; width: 0; height: 0; }
.flip { transform: scaleX(-1); }
.tag { height: 8px; }

.app {
  width: 1152px;
  height: 720px;
  margin: 0 auto;
  display: flex;
  flex-direction: column;
}

/* title bar */
.titlebar {
  height: 14px;
  display: flex;
  align-items: center;
  padding: 1px 3px 0 3px;
  background: linear-gradient(#8a8a8a 0, #666 3px, #1a1a1a 4px, #191919 100%);
  color: #f2f2f2;
}

.tia-logo {
  width: 11px;
  font-size: 5px;
  font-weight: 700;
  line-height: 4.5px;
  color: #a9b4dc;
}

.title-text {
  margin-left: 3px;
  font-size: 7.6px;
  font-weight: 600;
  letter-spacing: -.07px;
}

.win-btns {
  margin-left: auto;
  display: flex;
  align-items: center;
  gap: 4px;
  color: #fff;
}

.win-btns svg { width: 7px; height: 7px; }
.win-btns .min { width: 6px; height: 2px; margin-top: 5px; background: #fff; }
.win-btns .max { width: 7px; height: 6px; background: #ddd; border-top: 2px solid #fff; }

/* menu and toolbar */
.topbar {
  height: 30px;
  display: grid;
  grid-template: 15px 14px / 1fr 160px;
  background: #cdcdcd;
  border-bottom: 1px solid #33363c;
}

.menu {
  display: flex;
  align-items: center;
  gap: 10.2px;
  padding: 2px 0 0 7px;
  letter-spacing: -.03px;
}

.brand {
  grid-row: 1 / 3;
  grid-column: 2;
  padding: 9px 14px 0 0;
  display: flex;
  flex-direction: column;
  font-size: 8px;
}

.brand b { font-weight: 600; letter-spacing: .03px; margin-left: 12px; }
.brand span { margin-top: 1px; align-self: flex-end; font-size: 8.8px; line-height: 8px; letter-spacing: .3px; font-weight: 600; color: #6c6c6c; }

.toolbar {
  grid-row: 2;
  display: flex;
  align-items: center;
  gap: 4.300px;
  padding-left: 7px;
}

.toolbar svg { width: 9.500px; }
.toolbar .narrow { width: 5px; margin-left: -2px; }
.sep { width: 1px; height: 11px; background: #b9b9b9; }
.navy { color: #263478; }
.grey { color: #8d8d8d; }
.orange { color: #dd5526; }
.tb-save { width: 60px; margin-left: -2px; }
.tb-on { width: 84px; }
.tb-save, .tb-on, .tb-off { font-weight: 500; letter-spacing: -.13px; }
.tb-off { width: 82px; color: #909090; }
.toolbar .sep { margin: 0 -.5px; }

.search-box {
  width: 73px;
  height: 10px;
  padding: 1px 1px;
  line-height: 7px;
  background: #fafafa;
  border: 1px solid #999;
  color: #858585;
  letter-spacing: -.02px;
}

/* workspace */
.workspace {
  height: 630px;
  display: grid;
  grid-template-columns: 14px 274px 850px 14px;
  border-bottom: 1px solid #0a0a0a;
}

.strip-left {
  height: 629px;
  padding-top: 48px;
  background: linear-gradient(#a4a4a4 0 15px, #d0d0d0 15px 16px, #adadad 16px 147px, #d8d8d8 147px 148px, #a9a9a9 148px);
}

.strip-left span {
  display: block;
  width: 14px;
  height: 70px;
  writing-mode: vertical-rl;
  transform: rotate(180deg);
  line-height: 14px;
  font-size: 7.800px;
  font-weight: 600;
  color: #f2f2f2;
}

.sidebar {
  border-right: 2px solid #0c0c0c;
  background: #ececec;
  overflow: hidden;
}

.side-head {
  height: 15px;
  display: flex;
  align-items: center;
  padding: 1px 5px 0 3px;
  background: linear-gradient(#969696, #aaa);
  color: #fff;
  font-size: 8.100px;
  font-weight: 500;
}

.pin { width: 5px; height: 6px; margin-left: auto; border: 1px solid #d8d8d8; border-right-width: 2px; }

.tri-left {
  display: block;
  width: 0;
  height: 0;
  border: 3px solid transparent;
  border-right: 4px solid #fff;
  border-left: 0;
}

.side-head .tri-left { margin-left: 8px; }

.tab-band {
  height: 17px;
  padding: 2px 0 0 4px;
  background: #cbcbcb;
  border-top: 1px solid #ddd;
  border-bottom: 1px solid #8d8d8d;
}

.tab-band .tab {
  display: block;
  width: 67px;
  height: 14px;
  padding-left: 6px;
  line-height: 12px;
  background: #ececec;
  border: 1px solid #888;
  border-bottom: 0;
  font-size: 8px;
  font-weight: 600;
}

.side-tools {
  height: 16px;
  display: flex;
  align-items: center;
  padding: 0 5px 0 4px;
  background: linear-gradient(#f2f2f2, #e2e2e2);
}

.pressed {
  width: 13px;
  height: 13px;
  padding: 1px;
  border: 1px solid #7c88b4;
  background: #fafbff;
}

.pressed svg { width: 9px; height: 9px; }
.side-tools .pressed { margin: 0 3px 0 auto; }
.side-gap { height: 12px; background: #c2c2c2; }

.tree-wrap { height: 364px; display: flex; }
.tree { width: 261px; overflow: hidden; }

.tree-row {
  height: 11.397px;
  display: flex;
  align-items: center;
  background: #ececec;
  border-bottom: 1px solid #f8f8f8;
  letter-spacing: -.03px;
}

.tree-row span:last-of-type { padding-top: 1.500px; }
.tree-row::after { content: ""; width: 1px; height: 100%; margin: 0 11px 0 auto; background: #f8f8f8; }
.tree-row.dark, .tree-row.lv0 { background: #dedede; border-bottom-color: #eee; }
.tree-row.bold { font-weight: 700; letter-spacing: -.22px; background: #dcdcdc; }
.tree-row.selected { background: #d8dbe3; outline: 1px dotted #8b8f9b; outline-offset: -1px; }
.tree-row .arrow { width: 12px; height: 6px; display: flex; justify-content: center; align-items: center; }
.tree-row .arrow i { border: 3px solid transparent; }
.arrow.closed i { border-left: 4px solid #111; border-right: 0; }
.arrow.open i { border-top: 4px solid #111; border-bottom: 0; }
.tree-row svg { margin: 1px 2px 0 0; width: 10px; height: 10px; }
.lv1 { padding-left: 10.8px; }
.lv2 { padding-left: 21.6px; }
.lv3 { padding-left: 32.3px; }

.vscroll { width: 11px; display: flex; flex-direction: column; background: #bdbdbd; }
.btn { width: 11px; height: 11px; padding: 1px; border: 1px solid #999; background: #e8e8e8; color: #111; }
.btn.up { transform: rotate(180deg); }
.btn.l { transform: rotate(90deg); }
.btn.r { transform: rotate(-90deg); }
.vscroll .thumb { height: 166px; border: 1px solid #a2a2a2; background: linear-gradient(#888, #888) center / 5px 5px no-repeat, linear-gradient(90deg, #eee, #d2d2d2); }
.vscroll .rest { flex: 1; }

.detail-head {
  height: 14px;
  display: flex;
  align-items: center;
  border-top: 2px solid #0c0c0c;
  background: linear-gradient(#f0f0f0, #d6d6d6);
  font-size: 8.100px;
}

.detail-head svg { width: 8px; margin: 0 2px; color: #111; }
.detail-head b { padding: 1px 0 0 2px; border-left: 1px solid #999; font-weight: 600; line-height: 11px; }
.detail-band { height: 15px; background: #c9c9c9; border-bottom: 1px solid #8a8a8a; }
.detail-tools { height: 16px; background: #e9e9e9; }

.detail-cols, .detail-row {
  display: grid;
  grid-template-columns: 12px 132px 49px 48px 31px;
}

.detail-cols { height: 13px; line-height: 12px; padding-top: 1px; background: linear-gradient(#e4e4e4, #cecece); }
.detail-cols span { padding-left: 1.500px; border-right: 1px solid #b4b4b4; }
.sort { display: inline-block; margin: 0 0 1px 3px; border: 2.500px solid transparent; border-top: 0; border-bottom: 3px solid #222; }
.detail-rows { height: 137px; overflow: hidden; }
.detail-row { height: 11.41px; line-height: 9.4px; border-bottom: 1px solid #f9f9f9; }
.detail-row svg { height: 8px; margin: 2px 0 0 1px; }
.detail-row span:nth-child(2) { padding-left: 13.500px; letter-spacing: -.29px; }
.detail-row span { padding: 1px 0 0 3px; display: flex; align-items: center; justify-content: space-between; }

.ty, .dd {
  width: 9px;
  height: 9px;
  display: block;
  border: 1px solid #9a9ab0;
  background: linear-gradient(#55528e, #55528e) center / 3px 5px no-repeat, #d9d9ea;
}

.dd { margin-right: 1px; border-color: #a8a8a8; background: #e6e6e6; }
.dd::after { content: ""; display: block; margin: 2px auto 0; width: 0; border: 2.5px solid transparent; border-top: 3px solid #111; border-bottom: 0; }
.detail-row .dd::after { border-top-color: #777; }

.hscroll { height: 11px; display: flex; background: #c2c2c2; }
.hscroll .thumb { width: 243px; border: 1px solid #aaa; background: linear-gradient(#999, #999) center / 5px 5px no-repeat, linear-gradient(#eee, #d0d0d0); }
.hscroll .rest { flex: 1; }

/* editor */
.editor { height: 629px; background: #ececec; overflow: hidden; border-right: 1px solid #222; }

.crumbs {
  height: 15px;
  display: flex;
  align-items: center;
  padding: 1px 3px 0;
  background: linear-gradient(#2a3047, #343a53);
  color: #f5f5f5;
  font-size: 8.120px;
  font-weight: 500;
}

.crumb-text i { display: inline-block; margin: 0 4.500px 1px; border: 2px solid transparent; border-left: 3px solid #fff; border-right: 0; }

.ed-tabs {
  height: 17px;
  display: flex;
  justify-content: flex-end;
  gap: 1px;
  padding: 1px 4px 0 0;
  background: #cbcbcb;
  border-top: 2px solid #f0f0f0;
  border-bottom: 1px solid #999;
}

.tab svg { width: 9px; height: 8px; margin-right: 2px; }

.ed-tabs .tab, .inspector .tab {
  display: flex;
  align-items: center;
  padding-left: 1.500px;
  background: #f1f1f1;
  border: 1px solid #888;
  border-bottom: 0;
  font-size: 8px;
  font-weight: 600;
}

.ed-tabs .tab { width: 62px; height: 14px; }
.ed-tabs .tab.off { width: 114px; height: 13px; padding-left: 2px; }
.ed-tabs .tab.off, .inspector .tab.off { background: linear-gradient(#dedede, #c8c8c8); color: #686868; }

.ed-tools {
  height: 16px;
  display: flex;
  align-items: center;
  gap: 4px;
  padding: 0 10px 0 4px;
  background: linear-gradient(#f2f2f2, #e6e6e6);
}

.ed-tools .sep { margin: 0 -1.5px; }
.ed-tools .last { margin-left: auto; }

.ed-title {
  height: 13px;
  padding-left: 15px;
  line-height: 13px;
  background: #d9d9d9;
  font-size: 8px;
  font-weight: 600;
}

.grid-head, .grid-row, .grid-blank {
  display: grid;
  grid-template-columns: 23px 11px 120px 59px 61px 30px 30px 30px 30px 144px 1fr;
}

.grid-head {
  height: 12px;
  line-height: 12px;
  background: linear-gradient(#e4e4e4, #cacaca 50%, #e0e0e0);
  border-bottom: 1px solid #bbb;
}

.grid-head span { padding-left: 2px; background: linear-gradient(#eceeef, #dfe2e4); border-right: 1px solid #b5b5b5; }
.grid-head span:nth-child(2) { border: 0; }
.grid-head span:nth-child(3) { padding-left: 1px; }

.grid-body { background: #efefef; }

.grid-row { height: 11.410px; line-height: 9.4px; border-bottom: 1px solid #f6f7f8; }

.grid-row > span {
  padding: 1px 0 0 2.500px;
  display: flex;
  align-items: center;
  justify-content: space-between;
  background: #d8dde1;
  border-right: 1px solid #edf0f2;
}

.grid-row .num { background: #c9d1d8; color: #7c868e; font-size: 7px; }
.grid-row .ico { padding: 0; border: 0; background: #e2e4e8; }
.ico svg { height: 8px; }
.grid-row .name { padding-left: 14px; letter-spacing: -.29px; }
.grid-row.last .name { color: #9ca0a3; letter-spacing: 0; }
.grid-row .chk { padding: 0; justify-content: center; }

.box { width: 9px; height: 9px; border: 1px solid #c6c6c6; background: #ebebeb; }
.box.on { border-color: #5291ae; background: linear-gradient(135deg, #6cc4e8, #a6ecfc); }
.box.lock { border-color: #999; background: #fafafa; }
.box.on::after, .box.lock::after {
  content: "";
  display: block;
  width: 6px;
  height: 3.500px;
  margin: .5px 0 0 .8px;
  border: solid #143a6e;
  border-width: 0 0 1.800px 1.800px;
  transform: rotate(-45deg);
}
.box.lock::after { border-color: #444; }

.grid-blank {
  height: 392px;
  background: repeating-linear-gradient(transparent 0 10.400px, #fafafa 10.400px 11.400px), #eee;
}

.grid-blank i { border-right: 1px solid #f6f6f6; }
.grid-blank i:first-child { background: repeating-linear-gradient(transparent 0 10.400px, #eee 10.400px 11.400px), #d0d0d0; }
.grid-blank i:nth-child(2) { border: 0; }

.inspector {
  height: 16px;
  display: flex;
  padding: 1px 3px 0 0;
  justify-content: flex-end;
  background: #b1b1ae;
  border-top: 2px solid #0c0c0c;
}

.inspector .tab { width: 78px; height: 13px; margin-right: 1px; }
.inspector .tab.off { width: 75px; background: linear-gradient(#d8d8d8, #c5c5c5); }
.inspector .tab.diag { width: 72px; }
.badge { margin: 0 0 0 7px; width: 8px; height: 8px; border-radius: 4px; background: #e2d23c; color: #333; font-size: 6.500px; line-height: 8px; text-align: center; }
.insp-btns { display: flex; align-items: center; gap: 5px; margin-left: 11px; color: #f2f2f2; }
.insp-btns svg { width: 7px; height: 7px; }
.insp-btns .bar { width: 6px; height: 4px; border: 1px solid #eee; }
.tri-up { border: 3.500px solid transparent; border-top: 0; border-bottom: 4px solid #f2f2f2; }

/* right strip */
.strip-right { height: 629px; background: #adadad; }
.sr-head { height: 15px; padding: 4px 0 0 4px; background: #9c9c9c; }
.sr-tab { width: 12px; margin-bottom: 2px; border: 1px solid #888; border-left: 0; background: linear-gradient(90deg, #e6e6e6, #d2d2d2); color: #555; }
.sr-tab svg { width: 9px; margin: 1px 0 0 1px; }
.sr-tab span { display: block; writing-mode: vertical-rl; line-height: 11px; font-size: 8px; font-weight: 600; letter-spacing: -.08px; }
.tareas { height: 52px; margin-top: 2px; background: #f3f3f3; color: #222; }
.tareas span { margin-top: 2px; }
.librerias { height: 60px; }
.librerias span { margin-top: 1px; }
.complementos { height: 79px; padding-top: 5px; }

/* portal bar */
.portal-bar {
  height: 17px;
  display: flex;
  align-items: center;
  gap: 1px;
  padding: 0 0 0 21px;
  background: #1b1b1b;
}

.portal { width: 87px; display: flex; align-items: center; color: #f3f3f3; font-size: 8px; font-weight: 600; padding-top: 1px; }
.portal .tri-left { margin-right: 6px; }
.ptab { width: 68px; height: 11.500px; display: flex; align-items: center; padding-left: 2px; background: #c6c6c6; color: #3c3c3c; font-size: 7.200px; letter-spacing: -.1px; }
.ptab svg { width: 9px; height: 9px; margin-right: 3px; }
.ptab.active { background: #f8f8f8; color: #111; font-weight: 600; }
.status { margin-left: auto; width: 225px; display: flex; align-items: center; color: #e8e8e8; font-size: 7px; letter-spacing: -.12px; }
.status > span { padding-top: 1px; }
.st-icon { background: #d0d0d0; width: 12px; height: 12px; padding: 1px; }
.st-info { width: 9px; height: 9px; margin: 0 3px 0 6px; border-radius: 5px; background: #1212c8; color: #fff; font-weight: 700; line-height: 9px; text-align: center; }
.st-plug { margin: 0 12px 0 auto; color: #ccc; }

/* windows taskbar */
.taskbar {
  flex: 1;
  display: flex;
  background: #202020;
  border-top: 1px solid #333;
  color: #f0f0f0;
}

.weather { width: 396px; display: flex; align-items: flex-start; padding: 5px 0 0 11px; line-height: 9.500px; font-size: 7px; }
.weather svg { width: 18px; height: 16px; margin: -1px 1px 0 0; }
.weather span { color: #b4b4b4; }
.dock { display: flex; align-items: center; }
.dock .win { width: 14px; height: 14px; }
.task-search { width: 132px; height: 19px; margin: 0 4px 0 8px; padding-left: 6px; display: flex; align-items: center; gap: 6px; border-radius: 10px; background: #3a3a3a; border-top: 1px solid #4c4c4c; color: #ccc; font-size: 7.600px; }
.app-ic { width: 23px; height: 26px; margin-right: 3.400px; padding-top: 6px; display: flex; flex-direction: column; align-items: center; border-radius: 3px; }
.app-ic svg { width: 15px; height: 15px; }
.app-ic.run::after { content: ""; width: 3px; height: 2px; margin-top: 2px; background: #aaa; border-radius: 1px; }
.tia { padding-top: 5px; background: #303036; color: #d5d8f0; font-size: 7.500px; line-height: 7.500px; border-bottom: 2px solid #dc4c94; border-radius: 2px; font-weight: 600; }
.tray { margin-left: auto; display: flex; align-items: center; gap: 4px; padding-right: 11px; }
.tray .up { width: 9px; margin-right: 6px; transform: rotate(180deg); }
.tray .mic { height: 12px; fill: #9a4460; stroke: #c0506c; margin-right: 5px; }
.tray .batt { width: 13px; margin-left: 1px; }
.clock { width: 43px; text-align: right; font-size: 7.200px; line-height: 9.500px; }

/* export window behind the save dialog */
.export-win {
  position: absolute;
  left: 491px;
  top: 274px;
  width: 299px;
  height: 143px;
  display: flex;
  justify-content: space-between;
  padding: 2px 2px 0 3px;
  background: linear-gradient(#5a5a5a, #3c3c3c 12px, #a0a0a0 12px, #8f8f8f 115px, #777 115px);
  border: 1px solid #333;
  color: #b8b8b8;
  font-size: 8px;
  font-weight: 500;
}

.export-win svg { width: 8px; height: 8px; color: #fff; }

/* save dialog */
.dialog {
  position: absolute;
  left: 496px;
  top: 287px;
  width: 502px;
  height: 314px;
  border-radius: 5px;
  background: #191919;
  color: #e6e6e6;
  font-family: "Open Sans", "Noto Sans", sans-serif;
  font-size: 7px;
  letter-spacing: -.03px;
  overflow: hidden;
}

.dialog, .export-win { box-shadow: 0 0 2px #222, 0 10px 22px rgba(0, 0, 0, .6); }

.d-title { height: 18px; display: flex; align-items: center; justify-content: space-between; padding: 0 5px 0 5px; background: #1f1f1f; }
.d-title svg { width: 8px; height: 8px; }
.d-nav { height: 32px; display: flex; align-items: center; padding: 1px 0 0 8px; gap: 10px; }
.d-nav > svg { width: 9px; height: 9px; }
.d-nav .dim { color: #999; }
.rot { transform: rotate(90deg); }
.d-nav .small { width: 8px; }
.address { width: 284px; height: 20px; margin-left: -1px; padding: 0 6px 0 4px; display: flex; align-items: center; border: 1px solid #464646; }
.address .fold { width: 11px; margin-right: 2px; }
.address em { margin-right: 5px; color: #aaa; }
.address .gt { width: 6px; height: 6px; margin: 0 3.500px; transform: rotate(-90deg); }
.address .drop { width: 8px; margin-left: auto; }
.address .refresh { width: 8px; height: 8px; margin-left: 13px; }
.d-search { width: 121px; height: 20px; margin-left: -3px; padding: 0 7px 0 5px; display: flex; align-items: center; justify-content: space-between; border: 1px solid #464646; color: #777; }
.d-search svg { width: 8px; height: 8px; color: #ccc; }

.d-cmd { height: 19px; display: flex; align-items: center; padding: 1px 9px 0 11px; background: #1f1f1f; }
.org { width: 57px; }
.caret { display: inline-block; margin: 0 0 1px 2px; border: 2.500px solid transparent; border-top: 3px solid #ddd; border-bottom: 0; }
.listview { width: 10px; height: 9px; margin-left: auto; background: repeating-linear-gradient(#eee 0 1px, #777 1px 3px); border: 1px solid #ddd; }
.c2 { margin: 0 18px 0 5px; }
.help { width: 9px; height: 9px; border-radius: 5px; background: #1f94d2; color: #fff; line-height: 9px; text-align: center; }

.d-body { height: 171px; display: flex; }
.places { width: 95px; position: relative; border-right: 1px solid #2b2b2b; overflow: hidden; }
.place { height: 19.200px; width: 83px; display: flex; align-items: center; padding-left: 6px; overflow: hidden; }
.place span { padding-top: 1.500px; }
.place svg { width: 11px; margin-right: 2px; }
.place .ex { width: 8px; height: 8px; margin-right: 5px; transform: rotate(-90deg); }
.place .ex.open { transform: none; }
.place.p1 { padding-left: 19px; }
.place.p1 svg { margin-right: 3px; }
.place.p2 { padding-left: 11px; }
.place.sel { padding-left: 11px; background: #333; }
.rule { height: 19.500px; margin: 0 15px 0 5px; background: linear-gradient(#383838, #383838) 0 10px / 100% 1px no-repeat; }
.places-thumb { position: absolute; left: 88px; top: 99px; width: 1px; height: 49px; background: #a5a5a5; }

.files { position: relative; flex: 1; }
.sort-mark { position: absolute; left: 86px; top: -2px; width: 7px; height: 7px; color: #aaa; transform: rotate(180deg); }
.f-head, .f-row { display: grid; grid-template-columns: 163.500px 86.500px 72px 48px; align-items: center; }
.f-head { height: 16px; }
.f-head span { height: 16px; line-height: 17.500px; padding-left: 4px; border-right: 1px solid #464646; }
.f-head span:first-child { padding-left: 19px; }
.f-row { height: 21px; padding-top: 1px; }
.f-row span { padding-left: 4px; color: #c8c8c8; display: flex; align-items: center; letter-spacing: -.09px; }
.f-row span:first-child { padding-left: 11px; color: #e6e6e6; }
.f-row svg { width: 11px; margin-right: 2px; }

.d-foot { height: 74px; padding: 7px 3px 0 0; position: relative; background: #373737; }
.field { height: 15px; display: flex; }
.field label { width: 75px; padding-right: 3px; line-height: 15px; text-align: right; }
.input { flex: 1; height: 14px; padding: 0 1px; display: flex; align-items: center; justify-content: space-between; border: 1px solid #858585; background: #333; color: #e6e6e6; }
.input.on { border-color: #dcdcdc; }
.input svg { width: 7px; color: #bbb; }
mark { background: #2a5cc8; color: #dfe8ff; padding: 1px 0 1px 1px; }
.d-actions { display: flex; align-items: center; padding: 11px 7px 0 6px; }
.hide { margin-right: auto; display: flex; align-items: center; gap: 4px; padding-top: 5px; }
.hide svg { width: 8px; height: 8px; transform: rotate(180deg); }
.dbtn { width: 52px; height: 15px; margin-left: 8px; line-height: 14px; text-align: center; border: 1px solid #777; border-radius: 2px; background: #333; }
.dbtn.main { border-color: #d5d5d5; }
.grip { position: absolute; right: 1px; bottom: 1px; width: 6px; height: 5px; background: linear-gradient(135deg, transparent 50%, #aaa 50%); }

.cursor { position: absolute; left: 538px; top: 543px; width: 8px; height: 12px; }
```

FILE: app.js
```js
// level, icon, state of the arrow, label, extra classes
const tree = [
  [0, "page", "open", "4 motores forma 1"],
  [1, "new", "", "Agregar dispositivo"],
  [1, "net", "", "Dispositivos y redes"],
  [1, "plc", "open", "PLC_1 [CPU 1215C AC/DC/Rly]", "bold"],
  [2, "conf", "", "Configuración de dispositivos"],
  [2, "diag", "", "Online y diagnóstico"],
  [2, "blocks", "closed", "Bloques de programa"],
  [2, "tech", "closed", "Objetos tecnológicos"],
  [2, "ext", "closed", "Fuentes externas"],
  [2, "vars", "open", "Variables PLC"],
  [3, "alltags", "", "Mostrar todas las variables"],
  [3, "new", "", "Agregar tabla de variables"],
  [3, "stdtable", "", "Tabla de variables estándar [29]"],
  [3, "table", "", "4 motores [12]", "selected"],
  [2, "types", "closed", "Tipos de datos PLC"],
  [2, "wfolder", "open", "Tablas de observación y forzado permanente"],
  [3, "new", "", "Agregar tabla de observación"],
  [3, "watch", "", "4 MOTORES"],
  [3, "force", "", "Tabla de forzado permanente"],
  [2, "backup", "closed", "Backups online"],
  [2, "trace", "closed", "Traces"],
  [2, "proxy", "closed", "Datos de proxy de dispositivo"],
  [2, "info", "", "Información del programa"],
  [2, "list", "", "Listas de textos de aviso PLC"],
  [2, "plc", "closed", "Módulos locales"],
  [1, "ungroup", "closed", "Dispositivos no agrupados", "bold"],
  [1, "sec", "closed", "Configuración de seguridad", "dark"],
  [1, "func", "closed", "Funciones para varios dispositivos", "dark"],
  [1, "common", "closed", "Datos comunes", "dark"],
  [1, "doc", "closed", "Configuración del documento", "dark"],
  [1, "lang", "closed", "Idiomas y recursos", "dark"],
  [1, "vci", "closed", "Version Control Interface"]
];

const tags = [
  ["PULSADOR MARCHA MOTOR 1", "%I0.0"],
  ["PULSDOR PARO MOTOR 1", "%I0.1"],
  ["PULSADOR MARCHA MOTOR 2", "%I0.2"],
  ["PULSADOR PARO MOTOR 2", "%I0.3"],
  ["PULSADOR MARCHA MOTOR 3", "%I0.4"],
  ["PULSADOR PARO MOTOR 3", "%I0.5"],
  ["PULSADOR MARCHA MOTOR 4", "%I0.6"],
  ["PULSADOR PARO MOTOR 4", "%I0.7"],
  ["SALIDA MOTOR 1", "%Q0.0"],
  ["SALIDA MOTOR 2", "%Q0.1"],
  ["SALIDA MOTOR 3", "%Q0.2"],
  ["SALIDA MOTOR 4", "%Q0.3"]
];

const icon = (name) => `<svg><use href="#i-${name}"/></svg>`;

document.getElementById("tree").innerHTML = tree.map(([level, ic, state, label, extra]) =>
  `<div class="tree-row lv${level} ${extra || ""}"><span class="arrow ${state}">${state ? "<i></i>" : ""}</span>${icon(ic)}<span>${label}</span></div>`
).join("");

document.getElementById("detail").innerHTML = tags.map(([name, address], n) =>
  `<div class="detail-row">${icon("tag")}<span>${name}</span><span>Bool${n ? "" : '<i class="ty"></i>'}</span><span>${address}${n ? "" : '<i class="dd"></i>'}</span></div>`
).join("");

const check = (kind) => `<span class="chk"><i class="box ${kind}"></i></span>`;

document.getElementById("grid").innerHTML = tags.map(([name, address], n) =>
  `<div class="grid-row"><span class="num">${n + 1}</span><span class="ico">${icon("tag")}</span><span class="name">${name}</span>` +
  `<span>Bool${n ? "" : '<i class="ty"></i>'}</span><span>${address}${n ? "" : '<i class="dd"></i>'}</span>` +
  check("") + check("on") + check("on") + check("on") + `<span></span></div>`
).join("") +
  `<div class="grid-row last"><span class="num">13</span><span class="ico"></span><span class="name">&lt;Agregar&gt;</span><span></span><span></span>` +
  check("") + check("lock") + check("lock") + check("lock") + `<span></span></div>`;
```
